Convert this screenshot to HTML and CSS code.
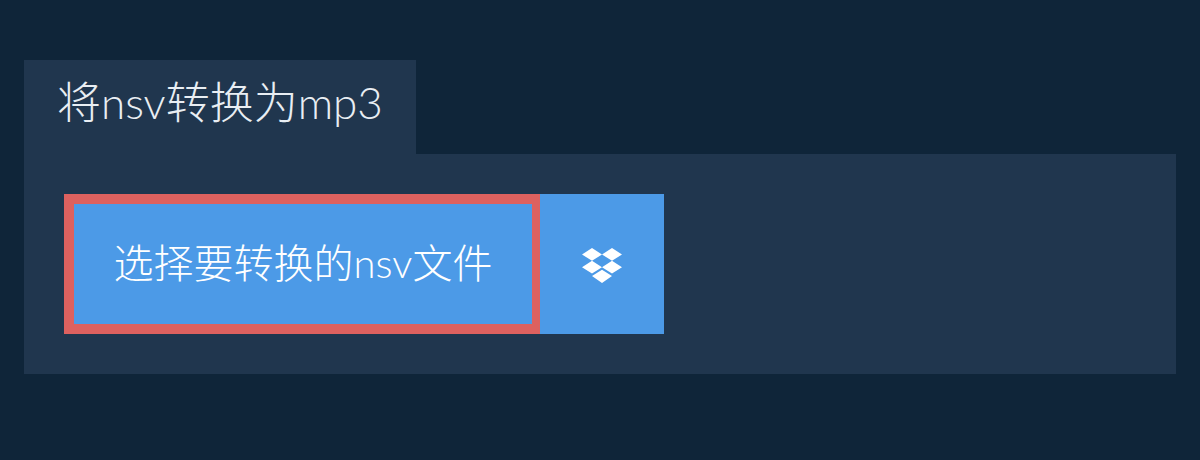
FILE: index.html
```html
<!DOCTYPE html>
<html lang="zh">
<head>
<meta charset="utf-8">
<title>将nsv转换为mp3</title>
<link rel="stylesheet" href="styles.css">
</head>
<body>
<main class="page">
  <h1 class="tab">将nsv转换为mp3</h1>
  <section class="panel">
    <div class="actions">
      <button class="choose" type="button">选择要转换的nsv文件</button>
      <button class="dropbox" type="button" aria-label="Dropbox">
        <svg class="dropbox-icon" viewBox="0 0 40 35" width="40" height="35" aria-hidden="true">
          <path d="M10 0 20 6.4 10 12.8 0 6.4ZM30 0 40 6.4 30 12.8 20 6.4ZM0 19.2 10 12.8 20 19.2 10 25.6ZM30 12.8 40 19.2 30 25.6 20 19.2ZM10 28 20 21.8 30 28 20 35Z" fill="#fff"/>
        </svg>
      </button>
    </div>
  </section>
</main>
</body>
</html>
```
FILE: styles.css
```css
* { box-sizing: border-box; }
html, body { margin: 0; height: 100%; }
body {
  background: #0f2539;
  font-family: Lato, "Noto Sans CJK SC", sans-serif;
  font-weight: 300;
}
.page { padding: 60px 24px 0; }
.tab {
  display: flex;
  align-items: center;
  width: 392px;
  height: 94px;
  margin: 0;
  padding: 0 0 11px 33px;
  background: #20364e;
  color: #e9eef3;
  font-size: 44px;
  font-weight: 300;
  line-height: 1;
}
.panel {
  height: 220px;
  padding: 40px;
  background: #20364e;
}
.actions { display: flex; height: 140px; }
.choose, .dropbox {
  margin: 0;
  background: #4c9ae7;
  color: #fff;
  font: inherit;
  cursor: pointer;
}
.choose {
  width: 476px;
  padding: 0 0 2px;
  border: solid #dd615f;
  border-width: 10px 8px 10px 10px;
  font-size: 40px;
  font-weight: 300;
  line-height: 1;
}
.dropbox {
  display: flex;
  align-items: center;
  justify-content: center;
  width: 124px;
  padding: 2px 0 0;
  border: 0;
}
```
